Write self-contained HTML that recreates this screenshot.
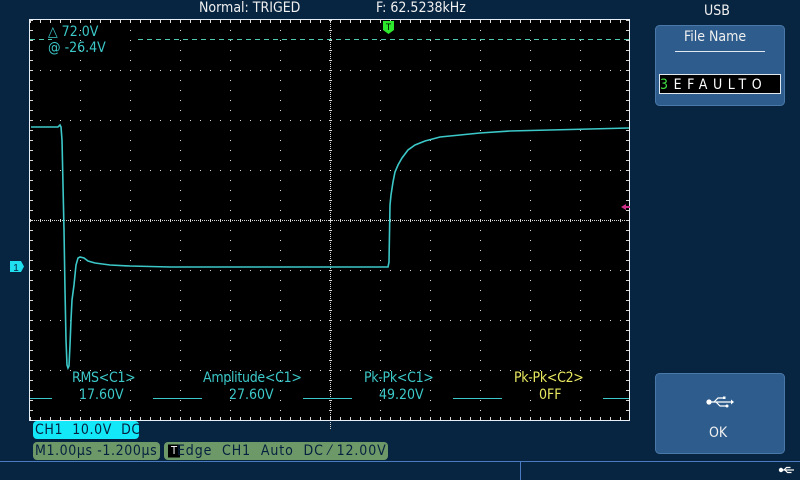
<!DOCTYPE html>
<html><head><meta charset="utf-8"><style>
html,body{margin:0;padding:0;}
body{width:800px;height:480px;background:#072440;overflow:hidden;position:relative;font-family:"DejaVu Sans Condensed","Liberation Sans",sans-serif;}
.t{position:absolute;white-space:nowrap;}
.m{letter-spacing:-0.3px;}
</style></head><body>
<svg width="800" height="480" style="position:absolute;left:0;top:0" font-family="Liberation Sans, sans-serif">
<rect x="29" y="19" width="601" height="402" fill="#000"/>
<g id="grid"></g>
<rect x="29.5" y="19.5" width="600" height="401" fill="none" stroke="#e8eef5" stroke-width="1"/>
<line x1="30" y1="39.5" x2="52" y2="39.5" stroke="#4fc9b0" stroke-dasharray="5,4"/>
<line x1="138" y1="39.5" x2="629" y2="39.5" stroke="#4fc9b0" stroke-dasharray="5,4"/>
<g stroke="#3cc8c8">
<line x1="30" y1="398.5" x2="52" y2="398.5"/><line x1="153" y1="398.5" x2="202" y2="398.5"/>
<line x1="303" y1="398.5" x2="352" y2="398.5"/><line x1="453" y1="398.5" x2="502" y2="398.5"/>
<line x1="603" y1="398.5" x2="629" y2="398.5"/>
</g>
<polyline fill="none" stroke="#3cc8c8" stroke-width="1.6" points="31,127 58,127 60,125 61,127 62,140 63,185 64,230 65,290 66,340 67,365 68,368 69,366 70,345 71,320 72,300 74,285 76,265 78,258 80,257 84,258 88,261 95,263 110,265 130,266 170,267 250,267 388,267 389,262 390,205 391,195 393,182 395,172 398,165 402,158 408,150 415,145 425,141 440,137 460,135 480,133 510,131 550,130 590,129 629,128"/>
<path d="M383,21 h11 v9 l-5.5,4 l-5.5,-4 z" fill="#2ee82e"/>
<text x="388.5" y="30" font-size="9" fill="#000" text-anchor="middle">T</text>
<path d="M621,207 l5,-3 v2 h4 v2 h-4 v2 z" fill="#d0308a"/>
<path d="M10,261 h11 l3,5.5 l-3,5.5 h-11 z" fill="#20e0f0"/>
<text x="16" y="271" font-size="10" fill="#062040" text-anchor="middle">1</text>
<line x1="0" y1="461.5" x2="800" y2="461.5" stroke="#4a7ac0"/>
<line x1="520.5" y1="462" x2="520.5" y2="480" stroke="#4a7ac0"/>
<rect x="655.5" y="25.5" width="129" height="80" rx="4" fill="#2e5c8c" stroke="#4a78a8"/>
<line x1="675" y1="51.5" x2="765" y2="51.5" stroke="#e0e8f0"/>
<rect x="659.5" y="74.5" width="121" height="19" fill="#000" stroke="#e0e8f0"/>
<rect x="655.5" y="373.5" width="129" height="80" rx="4" fill="#2e5c8c" stroke="#4a78a8"/>
<g stroke="#fff" fill="#fff" stroke-width="1.2">
<line x1="709" y1="402" x2="732" y2="402"/><circle cx="709" cy="402" r="2"/>
<path d="M714,402 l4,-4 h6" fill="none"/><path d="M716,402 l4,4 h6" fill="none"/>
<rect x="723" y="396.5" width="2.5" height="2.5" stroke="none"/><circle cx="727" cy="406" r="1.5" stroke="none"/>
<path d="M731,399.5 l3,2.5 l-3,2.5z" stroke="none"/>
</g>
<g stroke="#fff" fill="#fff" stroke-width="1.2">
<line x1="780" y1="470" x2="794" y2="470"/><circle cx="781" cy="470" r="1.6"/>
<path d="M784,470 l2.5,-2.5 h4 M785,470 l2.5,2.5 h4" fill="none"/>
</g>
<rect x="33" y="421" width="106" height="18" rx="4" fill="#12e8f8"/>
<rect x="33" y="442" width="127" height="18" rx="4" fill="#6d9868"/>
<rect x="164" y="442" width="224" height="18" rx="4" fill="#6d9868"/>
<rect x="168" y="444.5" width="12" height="13" fill="#000"/>
</svg>
<script>
(function(){var g=document.getElementById('grid');var s='';
for(var x=30;x<=629;x+=50){for(var y=20;y<=420;y+=10){var c=(x==330);s+='<rect x="'+x+'" y="'+y+'" width="1" height="1" fill="#d8d8d8"/>';if(c){for(var k=2;k<10;k+=2)s+='<rect x="'+x+'" y="'+(y+k)+'" width="1" height="1" fill="#d8d8d8"/>';}}}
for(var y=20;y<=420;y+=50){for(var x=30;x<=629;x+=10){var c=(y==220);s+='<rect x="'+x+'" y="'+y+'" width="1" height="1" fill="#d8d8d8"/>';if(c){for(var k=2;k<10;k+=2)s+='<rect x="'+(x+k)+'" y="'+y+'" width="1" height="1" fill="#d8d8d8"/>';}}}
for(var x=30;x<=629;x+=10){s+='<rect x="'+x+'" y="20" width="1" height="3" fill="#d8d8d8"/><rect x="'+x+'" y="417" width="1" height="3" fill="#d8d8d8"/>';}
for(var y=20;y<=420;y+=10){s+='<rect x="30" y="'+y+'" width="3" height="1" fill="#d8d8d8"/><rect x="626" y="'+y+'" width="3" height="1" fill="#d8d8d8"/>';}
for(var y=20;y<=420;y+=10){s+='<rect x="329" y="'+y+'" width="3" height="1" fill="#d8d8d8"/>';}
for(var x=30;x<=629;x+=10){s+='<rect x="'+x+'" y="219" width="1" height="3" fill="#d8d8d8"/>';}
g.innerHTML=s;})();
</script>
<div class="t" style="left:199px;top:0px;font-size:14px;color:#f0f0f0;">Normal: TRIGED</div>
<div class="t" style="left:376px;top:0px;font-size:14px;color:#f0f0f0;">F: 62.5238kHz</div>
<div class="t" style="left:704px;top:3px;font-size:14px;color:#f0f0f0;">USB</div>
<div class="t" style="left:48px;top:24px;font-size:14px;color:#3cc8c8;">△ 72.0V</div>
<div class="t" style="left:48px;top:40px;font-size:14px;color:#3cc8c8;">@ -26.4V</div>
<div class="t" style="left:684px;top:29px;font-size:14px;color:#f0f0f0;">File Name</div>
<div class="t" style="left:660px;top:77px;font-size:14px;color:#fff;letter-spacing:5.6px;"><span style="color:#40e040">3</span>EFAULTO</div>
<div class="t" style="left:709px;top:425px;font-size:14px;color:#f0f0f0;">OK</div>
<div class="t m" style="left:72px;top:370px;font-size:14px;color:#3cc8c8;">RMS&lt;C1&gt;</div>
<div class="t" style="left:79px;top:387px;font-size:14px;color:#3cc8c8;">17.60V</div>
<div class="t m" style="left:203px;top:370px;font-size:14px;color:#3cc8c8;">Amplitude&lt;C1&gt;</div>
<div class="t" style="left:229px;top:387px;font-size:14px;color:#3cc8c8;">27.60V</div>
<div class="t m" style="left:364px;top:370px;font-size:14px;color:#3cc8c8;">Pk-Pk&lt;C1&gt;</div>
<div class="t" style="left:379px;top:387px;font-size:14px;color:#3cc8c8;">49.20V</div>
<div class="t m" style="left:514px;top:370px;font-size:14px;color:#e8e860;">Pk-Pk&lt;C2&gt;</div>
<div class="t" style="left:539px;top:387px;font-size:14px;color:#e8e860;">0FF</div>
<div class="t" style="left:35px;top:422px;font-size:14px;color:#062040;letter-spacing:0.6px;">CH1&nbsp; 10.0V&nbsp; DC</div>
<div class="t" style="left:35px;top:443px;font-size:14px;color:#062040;letter-spacing:0.6px;">M1.00µs -1.200µs</div>
<div class="t" style="left:170px;top:443px;font-size:14px;color:#062040;letter-spacing:0.9px;"><span style="color:#fff;font-size:11px;position:relative;top:-1px;left:1px">T</span>Edge&nbsp; CH1&nbsp; Auto&nbsp; DC ⁄ 12.00V</div>
</body></html>
